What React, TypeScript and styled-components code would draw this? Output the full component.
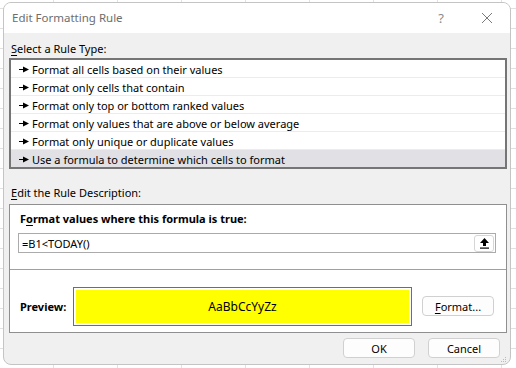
import styled, { createGlobalStyle } from 'styled-components';

const GlobalStyle = createGlobalStyle`
  html, body {
    margin: 0;
    padding: 0;
  }
  body {
    width: 516px;
    height: 368px;
    overflow: hidden;
    font-family: "Noto Sans", "Open Sans", sans-serif;
    font-size: 11px;
    color: #000;
    background-color: #fff;
    background-image:
      linear-gradient(to right, #e1e1e1 1px, transparent 1px),
      linear-gradient(to bottom, #e1e1e1 1px, transparent 1px);
    background-size: 64px 20px;
    background-position: 53px 0, 0 8px;
  }
`;

const Dialog = styled.div`
  margin: 2px 5px 0 3px;
  width: 508px;
  height: 363px;
  background: #f0f0f0;
  border: 1px solid #c4c4c4;
  border-radius: 8px;
  box-sizing: border-box;
  display: flex;
  flex-direction: column;
  overflow: hidden;
`;

const TitleBar = styled.div`
  height: 30px;
  background: #fff;
  display: flex;
  align-items: center;
  padding: 0 0 0 8px;
  flex-shrink: 0;
`;

const Title = styled.div`
  flex: 1;
  color: #6d6d6d;
  font-size: 11.5px;
  padding-bottom: 1px;
`;

const TitleButton = styled.div<{ $w: number }>`
  width: ${(p) => p.$w}px;
  height: 30px;
  display: flex;
  align-items: center;
  justify-content: center;
  color: #8a8a8a;
  font-size: 13px;
`;

const Body = styled.div`
  flex: 1;
  display: flex;
  flex-direction: column;
  padding: 0 3px 0 5px;
`;

const SectionLabel = styled.div<{ $top: number }>`
  margin-top: ${(p) => p.$top}px;
  height: 16px;
  line-height: 16px;
  padding-left: 2px;
`;

const Key = styled.span`
  text-decoration: underline;
  text-underline-offset: 2px;
`;

const RuleList = styled.div`
  margin-top: 1px;
  border: 2px solid #757575;
  background: #fff;
  display: flex;
  flex-direction: column;
`;

const RuleRow = styled.div<{ $selected?: boolean }>`
  height: 18px;
  display: flex;
  align-items: center;
  gap: 3px;
  padding: 2px 0 0 8px;
  box-sizing: border-box;
  background: ${(p) => (p.$selected ? '#e0e0e5' : '#fff')};
  border-bottom: 1px solid ${(p) => (p.$selected ? '#e0e0e5' : '#ececec')};
  &:last-child {
    border-bottom: none;
    height: 17px;
  }
`;

const DescBox = styled.div`
  margin-top: 3px;
  border: 1px solid #8f8f8f;
  background: #fff;
  display: flex;
  flex-direction: column;
  height: 129px;
  box-sizing: border-box;
`;

const FormulaSection = styled.div`
  padding: 6px 10px 16px 8px;
  border-bottom: 1px solid #a0a0a0;
`;

const BoldLabel = styled.div`
  font-weight: bold;
  height: 16px;
  line-height: 16px;
  padding-left: 2px;
`;

const FormulaInput = styled.div`
  margin-top: 6px;
  height: 20px;
  box-sizing: border-box;
  border: 1px solid #ababab;
  display: flex;
  align-items: center;
  padding-left: 3px;
`;

const FormulaText = styled.div`
  flex: 1;
`;

const CollapseButton = styled.div`
  width: 20px;
  height: 17px;
  margin-right: 1px;
  box-sizing: border-box;
  border: 1px solid #d6d6d6;
  border-radius: 3px;
  display: flex;
  align-items: center;
  justify-content: center;
`;

const PreviewSection = styled.div`
  flex: 1;
  display: flex;
  align-items: center;
  padding: 0 12px 0 10px;
`;

const PreviewLabel = styled.div`
  font-weight: bold;
  width: 53px;
  margin-top: 10px;
`;

const PreviewBox = styled.div`
  width: 339px;
  height: 39px;
  box-sizing: border-box;
  border: 1px solid #6e6e6e;
  padding: 2px;
  margin-top: 10px;
`;

const PreviewFill = styled.div`
  height: 100%;
  background: #ffff00;
  display: flex;
  align-items: center;
  justify-content: center;
  font-size: 12px;
`;

const Button = styled.div<{ $w: number }>`
  width: ${(p) => p.$w}px;
  height: 20px;
  box-sizing: border-box;
  border: 1px solid #d0d0d0;
  border-radius: 4px;
  background: #fdfdfd;
  display: flex;
  align-items: center;
  justify-content: center;
`;

const FormatButton = styled(Button)`
  margin-left: auto;
  margin-top: 10px;
`;

const Footer = styled.div`
  display: flex;
  justify-content: flex-end;
  gap: 13px;
  padding: 5px 7px 0 0;
  position: relative;
  flex: 1;
`;

const Grip = styled.svg`
  position: absolute;
  right: 0;
  bottom: 1px;
`;

const RuleArrow = () => (
  <svg width="10" height="7" viewBox="0 0 10 7">
    <rect x="0" y="3" width="5" height="1" fill="#000" />
    <polygon points="4,0.5 10,3.5 4,6.5" fill="#000" />
  </svg>
);

const rules = [
  'Format all cells based on their values',
  'Format only cells that contain',
  'Format only top or bottom ranked values',
  'Format only values that are above or below average',
  'Format only unique or duplicate values',
  'Use a formula to determine which cells to format',
];

export default function App() {
  return (
    <>
      <GlobalStyle />
      <Dialog>
        <TitleBar>
          <Title>Edit Formatting Rule</Title>
          <TitleButton $w={46}>?</TitleButton>
          <TitleButton $w={46}>
            <svg width="12" height="12" viewBox="0 0 12 12">
              <path d="M1 1 L11 11 M11 1 L1 11" stroke="#7a7a7a" strokeWidth="1" />
            </svg>
          </TitleButton>
        </TitleBar>
        <Body>
          <SectionLabel $top={8}>
            <Key>S</Key>elect a Rule Type:
          </SectionLabel>
          <RuleList>
            {rules.map((r, i) => (
              <RuleRow key={r} $selected={i === rules.length - 1}>
                <RuleArrow />
                {r}
              </RuleRow>
            ))}
          </RuleList>
          <SectionLabel $top={16}>
            <Key>E</Key>dit the Rule Description:
          </SectionLabel>
          <DescBox>
            <FormulaSection>
              <BoldLabel>
                F<Key>o</Key>rmat values where this formula is true:
              </BoldLabel>
              <FormulaInput>
                <FormulaText>=B1&lt;TODAY()</FormulaText>
                <CollapseButton>
                  <svg width="11" height="12" viewBox="0 0 11 12">
                    <polygon points="5.5,1 10,6 7,6 7,9 4,9 4,6 1,6" fill="#000" />
                    <rect x="1" y="10.5" width="9" height="1.2" fill="#000" />
                  </svg>
                </CollapseButton>
              </FormulaInput>
            </FormulaSection>
            <PreviewSection>
              <PreviewLabel>Preview:</PreviewLabel>
              <PreviewBox>
                <PreviewFill>AaBbCcYyZz</PreviewFill>
              </PreviewBox>
              <FormatButton $w={72}>
                <Key>F</Key>ormat...
              </FormatButton>
            </PreviewSection>
          </DescBox>
          <Footer>
            <Button $w={72}>OK</Button>
            <Button $w={72}>Cancel</Button>
            <Grip width="6" height="6" viewBox="0 0 6 6">
              <rect x="4" y="0" width="1" height="1" fill="#bbb" />
              <rect x="2" y="2" width="1" height="1" fill="#bbb" />
              <rect x="4" y="2" width="1" height="1" fill="#bbb" />
              <rect x="0" y="4" width="1" height="1" fill="#bbb" />
              <rect x="2" y="4" width="1" height="1" fill="#bbb" />
              <rect x="4" y="4" width="1" height="1" fill="#bbb" />
            </Grip>
          </Footer>
        </Body>
      </Dialog>
    </>
  );
}
